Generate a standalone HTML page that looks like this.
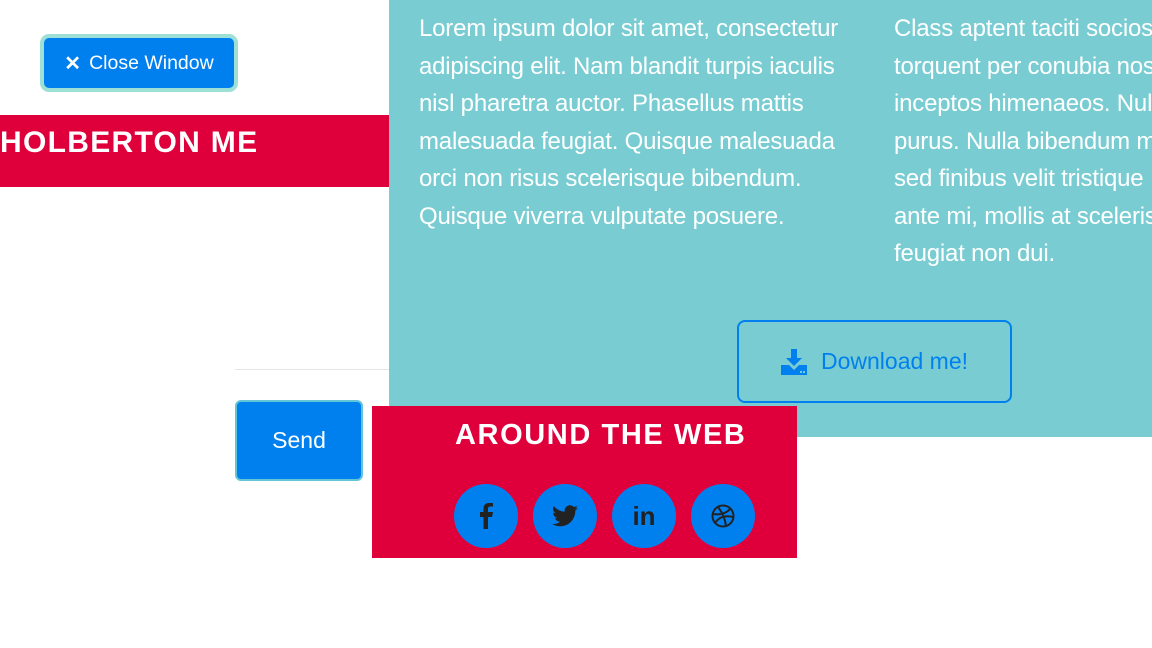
<!DOCTYPE html><html><head><style>
body{margin:0;width:1152px;height:648px;position:relative;overflow:hidden;background:#fff;font-family:"Liberation Sans",sans-serif}
.a{position:absolute}
.col{position:absolute;top:10px;color:#fff;font-size:24px;line-height:37.5px;white-space:nowrap;letter-spacing:-0.2px}
.c{position:absolute;top:484px;width:64px;height:64px;border-radius:50%;background:#0080ef;display:flex;align-items:center;justify-content:center}
</style></head><body>
<div class="a" style="left:389px;top:0;width:763px;height:437px;background:#79cdd2"></div>
<div class="col" style="left:419px">Lorem ipsum dolor sit amet, consectetur<br>adipiscing elit. Nam blandit turpis iaculis<br>nisl pharetra auctor. Phasellus mattis<br>malesuada feugiat. Quisque malesuada<br>orci non risus scelerisque bibendum.<br>Quisque viverra vulputate posuere.</div>
<div class="col" style="left:894px">Class aptent taciti sociosqu<br>torquent per conubia nostra<br>inceptos himenaeos. Nulla<br>purus. Nulla bibendum metus<br>sed finibus velit tristique<br>ante mi, mollis at scelerisque<br>feugiat non dui.</div>
<div class="a" style="left:737px;top:320px;width:271px;height:79px;border:2px solid #0080ef;border-radius:8px;color:#0080ef;font-size:23px;display:flex;align-items:center;justify-content:center;gap:14px">
<svg width="26" height="26" viewBox="0 0 26 26"><path d="M10 0h6v9h5l-8 8-8-8h5z" fill="#0080ef"/><path d="M0 16h8l5 5 5-5h8v10H0z" fill="#0080ef"/><rect x="19" y="22" width="2" height="2" fill="#79cdd2"/><rect x="22" y="22" width="2" height="2" fill="#79cdd2"/></svg>Download me!</div>
<div class="a" style="left:40px;top:34px;width:190px;height:50px;border:4px solid #9de0d6;border-radius:9px;background:#0080ef;box-sizing:content-box;color:#fff;font-size:19.5px;display:flex;align-items:center;justify-content:center;gap:8px"><b style="font-size:20px">✕</b>Close Window</div>
<div class="a" style="left:0;top:115px;width:389px;height:72px;background:#df003b;color:#fff;font-weight:bold;font-size:30px;line-height:56px;letter-spacing:1.3px">HOLBERTON ME</div>
<div class="a" style="left:235px;top:369px;width:154px;height:1px;background:#e6e6e6"></div>
<div class="a" style="left:235px;top:400px;width:124px;height:77px;border:2px solid #63c6d6;border-radius:6px;background:#0080ef;color:#fff;font-size:23px;display:flex;align-items:center;justify-content:center">Send</div>
<div class="a" style="left:372px;top:406px;width:425px;height:152px;background:#df003b"></div>
<div class="a" style="left:455px;top:419px;color:#fff;font-weight:bold;font-size:29px;letter-spacing:1.6px">AROUND THE WEB</div>
<div class="c" style="left:454px"><svg width="14" height="26" viewBox="0 0 14 26"><path d="M9 26V14h4l1-5H9V6c0-1.5.5-2.5 2.5-2.5H14V0h-4C6.5 0 4.5 2 4.5 5.5V9H1v5h3.5v12z" fill="#222"/></svg></div>
<div class="c" style="left:533px"><svg width="26" height="22" viewBox="0 0 24 20"><path d="M24 2.4a10 10 0 0 1-2.8.8A5 5 0 0 0 23.3.5a10 10 0 0 1-3.1 1.2A4.9 4.9 0 0 0 11.8 6 14 14 0 0 1 1.7.9a4.9 4.9 0 0 0 1.5 6.6 5 5 0 0 1-2.2-.6 4.9 4.9 0 0 0 4 4.9 5 5 0 0 1-2.2.1 4.9 4.9 0 0 0 4.6 3.4A9.9 9.9 0 0 1 0 17.3 14 14 0 0 0 7.5 19.5c9 0 14-7.5 14-14v-.6A10 10 0 0 0 24 2.4z" fill="#222"/></svg></div>
<div class="c" style="left:612px;color:#222;font-weight:bold;font-size:26px">in</div>
<div class="c" style="left:691px"><svg width="24" height="24" viewBox="0 0 24 24" fill="none" stroke="#222" stroke-width="2"><circle cx="12" cy="12" r="10.5"/><path d="M7 3c4 5 7 11 8 19M2 10c6 1 13 0 18-6M4 19c4-6 10-8 18-6"/></svg></div>
</body></html>
